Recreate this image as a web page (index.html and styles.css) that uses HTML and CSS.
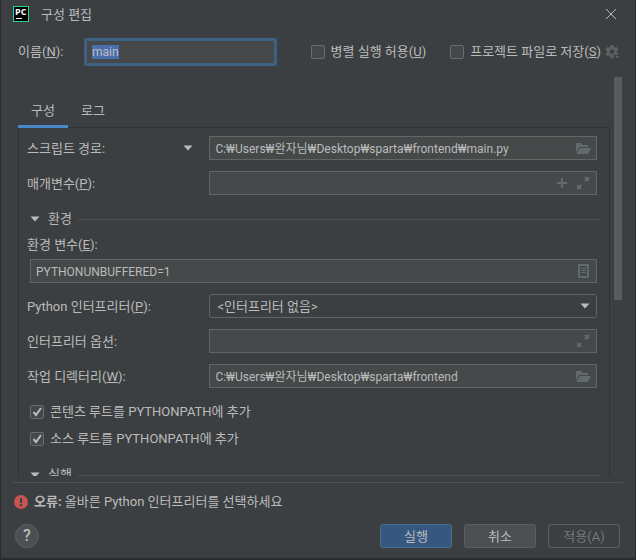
FILE: index.html
```
<!DOCTYPE html>
<html lang="ko">
<head>
  <meta charset="UTF-8">
  <title>구성 편집</title>
  <link rel="stylesheet" href="styles.css">
</head>
<body>
<!-- 공통 아이콘 -->
<svg class="symbols" aria-hidden="true">
  <symbol id="i-folder" viewBox="0 0 16 16">
    <path d="M1 3h5l1.500 2H13v2H4L1.500 12H1z"/>
    <path d="M4.500 8H16l-3 6H1.500z"/>
  </symbol>
  <symbol id="i-expand" viewBox="0 0 16 16">
    <path d="M9 2h5v5l-1.700-1.700-1.500 1.500-1.600-1.600 1.500-1.500zM2 9l1.700 1.700 1.500-1.500 1.600 1.600-1.500 1.500L7 14H2z"/>
  </symbol>
  <symbol id="i-plus" viewBox="0 0 16 16">
    <path d="M7 3h2v4h4v2H9v4H7V9H3V7h4z"/>
  </symbol>
  <symbol id="i-list" viewBox="0 0 16 16">
    <path fill-rule="evenodd" d="M3 1h11v14H3zM5 3v10h7V3z"/>
    <path d="M6 5h5v1H6zM6 7h5v1H6zM6 9h5v1H6z"/>
  </symbol>
  <symbol id="i-down" viewBox="0 0 10 6">
    <path d="M0.500 0.500h9L5 5.500z"/>
  </symbol>
</svg>

<div class="dialog">
  <header class="titlebar">
    <svg class="logo" viewBox="0 0 16 16" aria-hidden="true">
      <rect width="16" height="16" fill="#21d789"/>
      <rect x="1" y="1" width="14" height="14" fill="#000"/>
      <text x="2" y="9" class="logo-text">PC</text>
      <rect x="3" y="12" width="6" height="1" fill="#fff"/>
    </svg>
    <h1>구성 편집</h1>
    <button class="close" aria-label="닫기">
      <svg viewBox="0 0 12 12"><path d="M1 1l10 10M11 1L1 11"/></svg>
    </button>
  </header>

  <div class="name-row">
    <label class="name-label" for="name">이름(<u>N</u>):</label>
    <input id="name" class="name-input" type="text" value="main">
    <label class="check"><input type="checkbox">병렬 실행 허용(<u>U</u>)</label>
    <label class="check store"><input type="checkbox">프로젝트 파일로 저장(<u>S</u>)</label>
    <button class="gear" aria-label="저장 옵션" disabled>
      <svg viewBox="0 0 16 16">
        <path fill-rule="evenodd" d="M5.500 1h3l.4 1.900 1.300.7 1.800-.6 1.500 2.600-1.400 1.300v1.500l1.400 1.200-1.500 2.600-1.800-.6-1.300.8-.4 1.800h-3l-.4-1.800-1.300-.8-1.800.6L.5 9.600l1.400-1.200V6.900L.5 5.600 2 3l1.800.6 1.300-.7zM7 5.500a2.200 2.200 0 1 0 0 4.400 2.200 2.200 0 0 0 0-4.400z"/>
        <path class="gear-arrow" d="M9 11.500h6.500L12.300 15z"/>
      </svg>
    </button>
  </div>

  <main class="scroll">
    <div class="content">
      <nav class="tabs">
        <button class="tab active">구성</button>
        <button class="tab">로그</button>
      </nav>
      <div class="panel">
        <div class="row">
          <label for="script">스크립트 경로:</label>
          <button class="drop" aria-label="대상 선택"><svg><use href="#i-down"/></svg></button>
          <div class="field">
            <input id="script" type="text" value="C:₩Users₩완자님₩Desktop₩sparta₩frontend₩main.py">
            <button aria-label="찾아보기"><svg><use href="#i-folder"/></svg></button>
          </div>
        </div>
        <div class="row">
          <label for="params">매개변수(<u>P</u>):</label>
          <div class="field">
            <input id="params" type="text">
            <button aria-label="매크로 삽입"><svg><use href="#i-plus"/></svg></button>
            <button aria-label="확장"><svg><use href="#i-expand"/></svg></button>
          </div>
        </div>

        <h2 class="section"><svg><use href="#i-down"/></svg><span>환경</span></h2>
        <label class="env-label" for="env">환경 변수(<u>E</u>):</label>
        <div class="field env">
          <input id="env" type="text" value="PYTHONUNBUFFERED=1">
          <button aria-label="환경 변수 편집"><svg><use href="#i-list"/></svg></button>
        </div>
        <div class="row">
          <label for="interp">Python 인터프리터(<u>P</u>):</label>
          <div class="field combo">
            <select id="interp"><option>&lt;인터프리터 없음&gt;</option></select>
            <svg class="combo-arrow"><use href="#i-down"/></svg>
          </div>
        </div>
        <div class="row">
          <label for="options">인터프리터 옵션:</label>
          <div class="field">
            <input id="options" type="text">
            <button aria-label="확장"><svg><use href="#i-expand"/></svg></button>
          </div>
        </div>
        <div class="row">
          <label for="workdir">작업 디렉터리(<u>W</u>):</label>
          <div class="field">
            <input id="workdir" type="text" value="C:₩Users₩완자님₩Desktop₩sparta₩frontend">
            <button aria-label="찾아보기"><svg><use href="#i-folder"/></svg></button>
          </div>
        </div>
        <div class="checks">
          <label class="check"><input type="checkbox" checked>콘텐츠 루트를 PYTHONPATH에 추가</label>
          <label class="check"><input type="checkbox" checked>소스 루트를 PYTHONPATH에 추가</label>
        </div>
        <h2 class="section"><svg><use href="#i-down"/></svg><span>실행</span></h2>
      </div>
    </div>
    <div class="track"><div class="thumb"></div></div>
  </main>

  <div class="error" role="alert">
    <svg viewBox="0 0 14 14" aria-hidden="true">
      <circle cx="7" cy="7" r="7" fill="#c75450"/>
      <path d="M6 3h2v5H6zM6 9h2v2H6z" fill="#3c3f41"/>
    </svg>
    <p><b>오류:</b> 올바른 Python 인터프리터를 선택하세요</p>
  </div>

  <footer class="buttons">
    <button class="help" aria-label="도움말">?</button>
    <button class="btn primary">실행</button>
    <button class="btn">취소</button>
    <button class="btn" disabled>적용(A)</button>
  </footer>
</div>
<script>
// 대화상자가 열리면 이름을 바로 고칠 수 있게 선택해 둔다.
document.querySelector('#name').select();
</script>
</body>
</html>
```
FILE: styles.css
```
* {
  box-sizing: border-box;
}

body {
  margin: 0;
  background: #3c3f41;
  color: #bbbbbb;
}

body, button, input, select {
  font-family: Roboto, "Noto Sans CJK KR", sans-serif;
  font-size: 13px;
  line-height: 18px;
}

h1, h2, p {
  margin: 0;
  font-size: 13px;
  font-weight: normal;
}

button {
  padding: 0;
  border: 0;
  background: none;
  color: inherit;
}

input, select {
  color: inherit;
}

input {
  font-size: 12px;
}

.symbols {
  display: none;
}

.dialog {
  display: flex;
  flex-direction: column;
  height: 100vh;
  border: 1px solid #2b2b2b;
  border-width: 0 1px 2px;
}

/* 제목 */
.titlebar {
  display: flex;
  align-items: center;
  height: 28px;
  padding: 0 18px 0 12px;
}

.titlebar h1 {
  flex: 1;
  padding: 2px 0 0 12px;
}

.logo {
  width: 16px;
  height: 16px;
}

.logo-text {
  fill: #fff;
  font-family: "Open Sans", sans-serif;
  font-size: 9px;
  font-weight: bold;
}

.close, .close svg {
  display: block;
  width: 12px;
  height: 12px;
}

.close path {
  stroke: #bbbbbb;
  fill: none;
}

/* 이름 */
.name-row {
  display: flex;
  align-items: center;
  height: 28px;
  margin: 10px 14px 11px 17px;
}

.name-label {
  width: 66px;
}

.name-input {
  flex: 1;
  min-width: 0;
  height: 28px;
  margin-right: 34px;
  padding: 0 5px;
  border: 3px solid #3d6185;
  border-radius: 2px;
  outline: 0;
  background: #45494a;
}

.name-input::selection {
  background: #4b6eaf;
  color: #bbbbbb;
}

.check {
  display: flex;
  align-items: center;
}

.check input {
  appearance: none;
  width: 14px;
  height: 14px;
  margin: 0 6px 0 0;
  border: 1px solid #6b6b6b;
  border-radius: 2px;
  background: #43494a;
}

.check input:checked {
  background: #43494a url("data:image/svg+xml,%3Csvg xmlns='http://www.w3.org/2000/svg' viewBox='0 0 12 12'%3E%3Cpath d='M2.500 6l2.500 3 5-7' fill='none' stroke='%23bbb' stroke-width='2'/%3E%3C/svg%3E");
}

.store {
  margin-left: 24px;
}

.gear, .gear svg {
  display: block;
  width: 16px;
  height: 16px;
}

.gear {
  margin-left: 4px;
}

.gear path {
  fill: #5e6060;
}

.gear .gear-arrow {
  stroke: #3c3f41;
}

/* 본문 */
.scroll {
  display: flex;
  flex: 1;
  min-height: 0;
  padding-right: 13px;
  overflow: hidden;
}

.content {
  flex: 1;
  margin: 0 4px 0 17px;
}

.tabs {
  position: relative;
  display: flex;
  height: 51px;
  padding-top: 19px;
}

.tab {
  width: 50px;
  border-bottom: 3px solid transparent;
}

.tab.active {
  border-color: #4a88c7;
}

.panel {
  margin-top: -1px;
  padding: 8px 12px 0 8px;
  border: 1px solid #323232;
}

.row {
  display: flex;
  align-items: center;
  margin-bottom: 11px;
}

.row label {
  flex: 1;
  padding-top: 2px;
}

.row .field {
  width: 68%;
}

.drop {
  margin-right: 16px;
}

.drop svg, .section svg, .combo-arrow {
  display: block;
  width: 10px;
  height: 6px;
  fill: #bbbbbb;
}

.field {
  display: flex;
  align-items: center;
  height: 24px;
  border: 1px solid #646464;
  background: #45494a;
}

.field input {
  flex: 1;
  min-width: 0;
  padding: 2px 5px 0;
  border: 0;
  outline: 0;
  background: none;
}

.field button {
  width: 16px;
  margin-right: 5px;
}

.field button svg {
  display: block;
  width: 16px;
  height: 16px;
  fill: #616a6e;
}

.combo {
  position: relative;
  border-radius: 3px;
  background: #3c3f41;
}

.combo select {
  flex: 1;
  height: 22px;
  padding: 2px 7px 0;
  border: 0;
  appearance: none;
  background: none;
}

.combo-arrow {
  position: absolute;
  right: 6px;
  pointer-events: none;
}

.section {
  display: flex;
  align-items: center;
  height: 18px;
  margin: 15px -3px 8px 3px;
}

.section span {
  padding: 0 6px 0 8px;
}

.section::after {
  content: "";
  flex: 1;
  border-top: 1px solid #515151;
}

.env-label {
  display: block;
  margin-bottom: 5px;
}

.env {
  margin: 0 0 11px 3px;
}

.checks {
  margin: 15px 3px 0;
}

.checks .check {
  height: 18px;
  margin-bottom: 9px;
}

.checks + .section {
  margin-top: 18px;
}

.track {
  width: 8px;
}

.thumb {
  height: 56%;
  background: #595b5d;
}

/* 오류 */
.error {
  display: flex;
  align-items: center;
  gap: 6px;
  margin: 6px 12px 0;
  padding: 10px 1px 13px;
  border-top: 1px solid #515151;
}

.error svg {
  width: 14px;
  height: 14px;
}

/* 버튼 */
.buttons {
  display: flex;
  gap: 12px;
  padding: 0 15px 10px 14px;
}

.btn {
  width: 72px;
  height: 24px;
  padding-top: 2px;
  border: 1px solid #5e6060;
  border-radius: 3px;
  background: #4c5052;
}

.btn.primary {
  border-color: #4c708c;
  background: #365880;
}

.btn:disabled {
  background: none;
  color: #777777;
}

.help {
  width: 24px;
  height: 24px;
  margin-right: auto;
  border: 1px solid #5e6060;
  border-radius: 50%;
  background: #4c5052;
  font-size: 16px;
  font-weight: 500;
}
```
